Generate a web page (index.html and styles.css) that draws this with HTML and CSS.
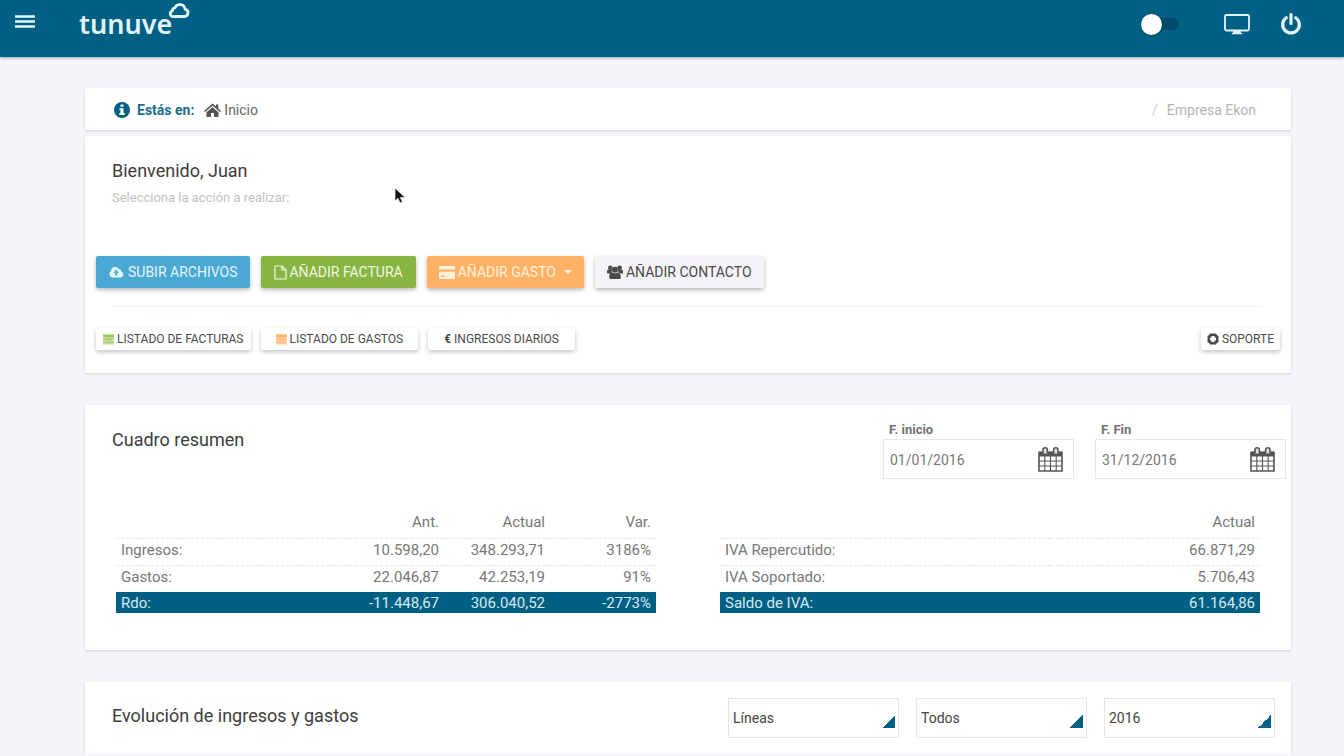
FILE: index.html
```html
<!DOCTYPE html>
<html lang="es">
<head>
<meta charset="utf-8">
<meta name="viewport" content="width=device-width, initial-scale=1">
<title>tunuve</title>
<link rel="stylesheet" href="styles.css">
</head>
<body>
<header class="topbar">
  <button class="icon-btn menu-btn" type="button" aria-label="Menú">
    <svg width="20" height="16" viewBox="0 0 20 16"><path d="M0 2.500h20M0 7.500h20M0 12.500h20" stroke="currentColor" stroke-width="2.600"/></svg>
  </button>
  <a class="logo" href="#">tunuve<svg class="logo-cloud" width="22" height="16" viewBox="0 0 22 16"><path d="M6 13.500h10.500a3.700 3.700 0 0 0 .6-7.300A5.300 5.300 0 0 0 7 4.800a3 3 0 0 0-2.600 3.100A2.900 2.900 0 0 0 6 13.500z" fill="none" stroke="currentColor" stroke-width="2.800" stroke-linejoin="round"/></svg></a>
  <div class="topbar-actions">
    <input class="switch" type="checkbox" aria-label="Cambiar modo">
    <button class="icon-btn" type="button" aria-label="Pantalla">
      <svg width="28" height="22" viewBox="0 0 28 22"><rect x="2" y="2" width="24" height="15.500" rx="1.500" fill="none" stroke="currentColor" stroke-width="1.800"/><path d="M10.500 17.500h7l.7 2.500h1v1.300H8.800V20h1z" fill="currentColor"/></svg>
    </button>
    <button class="icon-btn" type="button" aria-label="Salir">
      <svg width="22" height="24" viewBox="0 0 22 24"><path d="M6.300 5.800a8.300 8.300 0 1 0 9.400 0M11 2.500v9" fill="none" stroke="currentColor" stroke-width="3.200" stroke-linecap="round"/></svg>
    </button>
  </div>
</header>

<main class="page">
  <nav class="card breadcrumb" aria-label="Ruta">
    <div class="crumbs">
      <svg class="info" width="16" height="16" viewBox="0 0 16 16"><circle cx="8" cy="8" r="8" fill="currentColor"/><path d="M6.500 2.500h3v2.300h-3zM5.500 6.300h4V11h1.200v2H5.300v-2h1.200V8.200h-1z" fill="#fff"/></svg>
      <strong>Estás en:</strong>
      <a class="home" href="#"><svg width="17" height="14" viewBox="0 0 17 14"><path d="M8.500.6 12 3.600V1.500h2.300v4.100L17 7.900l-1 1.200-7.500-6.300L1 9.100 0 7.900zM8.500 4.200l6 5V14H10v-4H7v4H2.500V9.200z" fill="currentColor"/></svg>Inicio</a>
    </div>
    <div class="company"><span class="slash">/</span><span>Empresa Ekon</span></div>
  </nav>

  <section class="card welcome">
    <h1>Bienvenido, Juan</h1>
    <p class="hint">Selecciona la acción a realizar:</p>
    <div class="actions">
      <button class="btn blue" type="button"><svg width="15" height="12" viewBox="0 0 15 12"><path fill-rule="evenodd" d="M3.500 11.500a3.400 3.400 0 0 1-1.300-6.400A4.100 4.100 0 0 1 10 3.300a2.200 2.200 0 0 1 2.500 2.500 3 3 0 0 1-.6 5.700zM7.200 3.700 4.200 7h2v2.500h2V7h2z" fill="currentColor"/></svg>SUBIR ARCHIVOS</button>
      <button class="btn green" type="button"><svg width="13" height="15" viewBox="0 0 13 15"><path d="M1 1h7l4 4v9H1zM8 1v4h4" fill="none" stroke="currentColor" stroke-width="1.200"/></svg>AÑADIR FACTURA</button>
      <button class="btn orange" type="button"><svg width="16" height="13" viewBox="0 0 16 13"><path fill-rule="evenodd" d="M1 0h14a1 1 0 0 1 1 1v11a1 1 0 0 1-1 1H1a1 1 0 0 1-1-1V1a1 1 0 0 1 1-1zM0 3.500v2.300h16V3.500zM2 9.500v1.300h4V9.500z" fill="currentColor"/></svg>AÑADIR GASTO<svg class="caret" width="8" height="4" viewBox="0 0 8 4"><path d="M0 0h8L4 4z" fill="currentColor"/></svg></button>
      <button class="btn light" type="button"><svg width="16" height="14" viewBox="0 0 16 14"><g fill="currentColor"><circle cx="3.300" cy="2.700" r="2.300"/><circle cx="12.700" cy="2.700" r="2.300"/><circle cx="8" cy="4.700" r="3"/><path d="M0 8V6.500Q0 4.500 1.500 4.500H5l-.5 4H1Q0 8.500 0 8zM16 8V6.500q0-2-1.500-2H11l.5 4H15q1 0 1-.5zM3 14q-.8-.5-.8-2 0-4.200 2.800-4.500l3 1 3-1q2.800.3 2.800 4.500 0 1.500-.8 2z"/></g></svg>AÑADIR CONTACTO</button>
    </div>
    <hr class="rule">
    <div class="links">
      <button class="btn small invoices" type="button"><svg class="green-icon" width="11" height="11" viewBox="0 0 12 11"><path d="M0 0h12v11H0z" fill="currentColor" opacity=".65"/><path d="M0 0h12v3H0zM2 5h8v1H2zM2 8h8v1H2z" fill="currentColor"/></svg>LISTADO DE FACTURAS</button>
      <button class="btn small expenses" type="button"><svg class="orange-icon" width="11" height="11" viewBox="0 0 12 11"><path d="M0 0h12v11H0z" fill="currentColor" opacity=".65"/><path d="M0 0h12v3H0zM2 5h8v1H2zM2 8h8v1H2z" fill="currentColor"/></svg>LISTADO DE GASTOS</button>
      <button class="btn small income" type="button"><b>€</b>INGRESOS DIARIOS</button>
      <button class="btn small support" type="button"><svg width="12" height="12" viewBox="0 0 12 12"><path fill-rule="evenodd" d="M3 .5h6q.5 1.500 2.500 2.500v6q-2 .8-2.500 2.500H3Q2.500 9.800.5 9V3Q2.500 2 3 .5zM4.500 3v1.500H3v3h1.500V9h3V7.500H9v-3H7.500V3z" fill="currentColor"/></svg>SOPORTE</button>
    </div>
  </section>

  <section class="card summary">
    <div class="summary-head">
      <h2>Cuadro resumen</h2>
      <div class="dates">
        <div class="field">
          <label for="from">F. inicio</label>
          <div class="date-box"><input id="from" type="text" value="01/01/2016"><svg width="25" height="26" viewBox="0 0 25 26"><path d="M1 6.500h23V25H1z" fill="none" stroke="currentColor" stroke-width="1.600"/><path d="M1 5.500h23v5H1z" fill="currentColor"/><path d="M6.800 10v15M12.500 10v15M18.200 10v15M1 15h23M1 20h23" stroke="currentColor" stroke-width="1.100"/><path d="M5 7.500V4a2.200 2.200 0 0 1 4.400 0v3.500M15.600 7.500V4A2.200 2.200 0 0 1 20 4v3.500" fill="#ddd" stroke="currentColor" stroke-width="1.600"/></svg></div>
        </div>
        <div class="field">
          <label for="to">F. Fin</label>
          <div class="date-box"><input id="to" type="text" value="31/12/2016"><svg width="25" height="26" viewBox="0 0 25 26"><path d="M1 6.500h23V25H1z" fill="none" stroke="currentColor" stroke-width="1.600"/><path d="M1 5.500h23v5H1z" fill="currentColor"/><path d="M6.800 10v15M12.500 10v15M18.200 10v15M1 15h23M1 20h23" stroke="currentColor" stroke-width="1.100"/><path d="M5 7.500V4a2.200 2.200 0 0 1 4.400 0v3.500M15.600 7.500V4A2.200 2.200 0 0 1 20 4v3.500" fill="#ddd" stroke="currentColor" stroke-width="1.600"/></svg></div>
        </div>
      </div>
    </div>
    <div class="tables">
      <table class="figures results">
        <thead><tr><td></td><th scope="col">Ant.</th><th scope="col">Actual</th><th scope="col">Var.</th></tr></thead>
        <tbody>
          <tr><th scope="row">Ingresos:</th><td>10.598,20</td><td>348.293,71</td><td>3186%</td></tr>
          <tr><th scope="row">Gastos:</th><td>22.046,87</td><td>42.253,19</td><td>91%</td></tr>
        </tbody>
        <tfoot><tr><th scope="row">Rdo:</th><td>-11.448,67</td><td>306.040,52</td><td>-2773%</td></tr></tfoot>
      </table>
      <table class="figures">
        <thead><tr><td></td><th scope="col">Actual</th></tr></thead>
        <tbody>
          <tr><th scope="row">IVA Repercutido:</th><td>66.871,29</td></tr>
          <tr><th scope="row">IVA Soportado:</th><td>5.706,43</td></tr>
        </tbody>
        <tfoot><tr><th scope="row">Saldo de IVA:</th><td>61.164,86</td></tr></tfoot>
      </table>
    </div>
  </section>

  <section class="card evolution">
    <h2>Evolución de ingresos y gastos</h2>
    <div class="filters">
      <select aria-label="Tipo de gráfico"><option>Líneas</option></select>
      <select aria-label="Datos"><option>Todos</option></select>
      <select aria-label="Año"><option>2016</option></select>
    </div>
  </section>
</main>
<svg class="pointer" width="12" height="18" viewBox="0 0 12 18" aria-hidden="true"><path d="M1 1v13l3-2.800L6 16l2.400-1-2-4.600H11z" fill="#111" stroke="#eee" stroke-width=".8"/></svg>
</body>
</html>
```
FILE: styles.css
```css
* { box-sizing: border-box; }

body {
  margin: 0;
  background: #f5f4f8;
  color: #444;
  font-family: Roboto, "Liberation Sans", sans-serif;
  font-size: 14px;
}

h1, h2, p { margin: 0; }
h1, h2 { font-size: 18px; font-weight: 400; line-height: 24px; color: #3c3c3c; }
a { color: inherit; text-decoration: none; }
svg { flex: none; display: block; }
button, input, select { font: inherit; color: inherit; }

.topbar {
  display: flex;
  align-items: center;
  height: 57px;
  padding: 0 42px 9px 15px;
  background: #006084;
  color: #e2f3fa;
  box-shadow: 0 1px 3px rgba(0, 50, 80, .4);
}
.icon-btn { padding: 0; border: 0; background: none; }
.menu-btn { margin-top: -4px; }
.logo {
  display: flex;
  margin-left: 44px;
  font-family: "Noto Sans", sans-serif;
  font-size: 27px;
  font-weight: 600;
  line-height: 44px;
}
.logo-cloud { margin: 1px 0 0 -4px; }
.topbar-actions { display: flex; align-items: center; margin-left: auto; }
.topbar-actions .icon-btn + .icon-btn { margin-left: 29px; }
.switch {
  appearance: none;
  display: flex;
  align-items: center;
  width: 38px;
  height: 12px;
  margin: 0 44px 0 0;
  border-radius: 6px;
  background: linear-gradient(#004a69, #004a69) right / 30px 12px no-repeat;
}
.switch::before {
  content: "";
  width: 21px;
  height: 21px;
  flex: none;
  border-radius: 50%;
  background: #fff;
  box-shadow: 0 1px 2px rgba(0, 0, 0, .3);
}

.page { padding: 31px 53px 0 85px; }
.card { background: #fff; box-shadow: 0 1px 2px rgba(0, 0, 0, .15); }

.breadcrumb {
  display: flex;
  justify-content: space-between;
  align-items: center;
  height: 42px;
  padding: 1px 35px 0 29px;
}
.crumbs { display: flex; align-items: center; color: #666; }
.crumbs strong { margin: 0 10px 0 7px; color: #1b6c8e; }
.crumbs .info { color: #006084; }
.home { display: flex; align-items: center; gap: 3px; }
.home svg { color: #555; }
.company { display: flex; gap: 9px; color: #b4b4b4; }
.slash { color: #ccc; }

.welcome { margin-top: 6px; padding: 23px 11px 23px; }
.welcome h1, .hint { padding-left: 16px; }
.hint { margin-top: 6px; font-size: 13px; line-height: 18px; color: #c2c2c2; }
.actions { display: flex; gap: 11px; margin-top: 49px; }
.links { display: flex; gap: 10px; }
.btn {
  display: flex;
  align-items: center;
  justify-content: center;
  gap: 4px;
  height: 32px;
  padding: 0 13px;
  border: 0;
  border-radius: 2px;
  white-space: nowrap;
  box-shadow: 0 2px 4px rgba(0, 0, 0, .28);
}
.blue { background: #4aa9d2; color: #e4f5fc; }
.green { gap: 2px; background: #88b544; color: #eff8df; }
.orange { gap: 3px; padding: 0 12px; background: #ffb266; color: #fff0dc; }
.caret { margin-left: 5px; }
.light { gap: 3px; padding: 0 12px; background: #f5f4f8; color: #4a4a4a; }
.rule { height: 1px; margin: 18px 17px 21px 16px; border: 0; background: #f4f4f4; }
.small {
  gap: 3px;
  height: 22px;
  padding: 0 7px;
  font-size: 12px;
  background: #fff;
  color: #4a4a4a;
  box-shadow: 0 2px 4px rgba(0, 0, 0, .24);
}
.expenses { padding: 0 15px; }
.income { padding: 0 16px; }
.support { margin-left: auto; padding: 0 6px; }
.green-icon { color: #a3ca66; }
.orange-icon { color: #ffb46c; }

.summary { margin-top: 32px; padding: 16px 5px 37px 27px; }
.summary-head { display: flex; justify-content: space-between; }
.summary-head h2 { padding-top: 7px; }
.dates { display: flex; gap: 21px; }
.field { width: 191px; }
.field label {
  display: block;
  padding-left: 6px;
  font-size: 13px;
  font-weight: 700;
  line-height: 18px;
  color: #707070;
}
.date-box {
  display: flex;
  align-items: center;
  height: 40px;
  padding: 0 10px 0 6px;
  border: 1px solid #e6e6e6;
}
.date-box input { flex: 1; min-width: 0; padding: 2px 0 0; border: 0; background: none; color: #777; }
.date-box svg { color: #555; }

.tables { display: grid; grid-template-columns: 1fr 1fr; gap: 64px; margin: 31px 26px 0 4px; }
.figures { width: 100%; align-self: start; border-collapse: collapse; color: #777; font-size: 15px; line-height: 20px; }
.figures td, .figures th { height: 28px; padding: 0 5px; font-weight: 400; text-align: right; }
.figures thead th { padding-bottom: 4px; }
.figures th[scope="row"] { text-align: left; }
.figures tbody tr { border-top: 1px dashed #e6e6e6; }
.figures tbody th, .figures tbody td { height: 27px; padding-bottom: 3px; }
.figures tfoot { background: #006084; color: #d5e9f1; }
.figures tfoot th, .figures tfoot td { height: 21px; }
.results { table-layout: fixed; }
.results thead th:nth-child(2) { width: 110px; }
.results thead th:nth-child(3) { width: 106px; }
.results thead th:nth-child(4) { width: 106px; }

.evolution {
  display: flex;
  justify-content: space-between;
  align-items: center;
  margin-top: 32px;
  padding: 16px 16px 16px 27px;
}
.evolution h2 { padding-bottom: 4px; }
.filters { display: flex; gap: 17px; }
.filters select {
  appearance: none;
  width: 171px;
  height: 40px;
  padding: 0 4px;
  border: 1px solid #e6e6e6;
  border-radius: 0;
  background: linear-gradient(135deg, transparent 50%, #006084 50%) right 3px bottom 9px / 13px 13px no-repeat;
  color: #444;
}

.pointer { position: absolute; left: 394px; top: 187px; }
```
